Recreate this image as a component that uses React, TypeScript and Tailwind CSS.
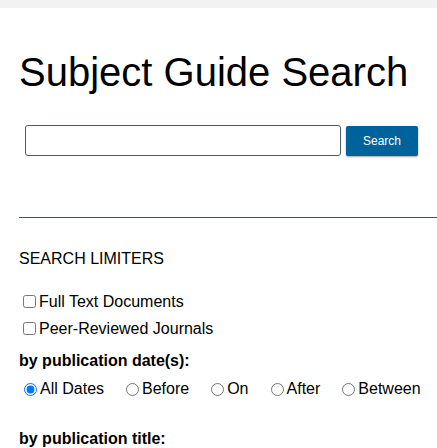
// Subject Guide Search page
import { useState } from 'react';

const dateOptions = ['All Dates', 'Before', 'On', 'After', 'Between'];

const App = () => {
  const [query, setQuery] = useState('');
  const [fullText, setFullText] = useState(false);
  const [peer, setPeer] = useState(false);
  const [dateMode, setDateMode] = useState('All Dates');

  return (
    <div className="min-h-screen bg-white text-black font-['Liberation_Sans',Arial,sans-serif]">
      <div className="h-[8px] bg-[#f2f2f2]" />
      <div className="pl-[19px]">
        <h1 className="mt-[41px] text-[40px] leading-[46px] font-normal">Subject Guide Search</h1>

        <div className="mt-[30px] flex items-end">
          <input
            type="text"
            value={query}
            onChange={(e) => setQuery(e.target.value)}
            className="ml-[6px] h-[31px] w-[316px] rounded-[3px] border border-[#525a62] px-2 text-base outline-none"
          />
          <button className="ml-[5px] h-[30px] w-[72px] rounded-[2px] bg-[#00629b] text-[12px] text-white shadow-[0_1px_2px_rgba(0,0,0,0.35)]">
            Search
          </button>
        </div>

        <div className="mt-[61px] h-px bg-[#4b5259]" />

        <h2 className="mt-[32px] text-base leading-[18px] font-normal">SEARCH LIMITERS</h2>

        <div className="mt-[20px]">
          <label className="flex h-[27px] items-center text-base leading-[18px]">
            <input
              type="checkbox"
              checked={fullText}
              onChange={() => setFullText(!fullText)}
              className="ml-[4px] mr-[3px] h-[13px] w-[13px]"
            />
            Full Text Documents
          </label>
          <label className="flex h-[27px] items-center text-base leading-[18px]">
            <input
              type="checkbox"
              checked={peer}
              onChange={() => setPeer(!peer)}
              className="ml-[4px] mr-[3px] h-[13px] w-[13px]"
            />
            Peer-Reviewed Journals
          </label>
        </div>

        <h3 className="mt-[10px] text-base leading-[18px] font-bold">by publication date(s):</h3>

        <div className="mt-[10px] flex gap-[17px] text-base leading-[18px]">
          {dateOptions.map((opt) => (
            <label key={opt} className="flex items-center">
              <input
                type="radio"
                name="pubdate"
                checked={dateMode === opt}
                onChange={() => setDateMode(opt)}
                className="ml-[5px] mr-[3px] h-[13px] w-[13px]"
              />
              {opt}
            </label>
          ))}
        </div>

        <h3 className="mt-[32px] text-base leading-[18px] font-bold">by publication title:</h3>
      </div>
    </div>
  );
};

export default App;
